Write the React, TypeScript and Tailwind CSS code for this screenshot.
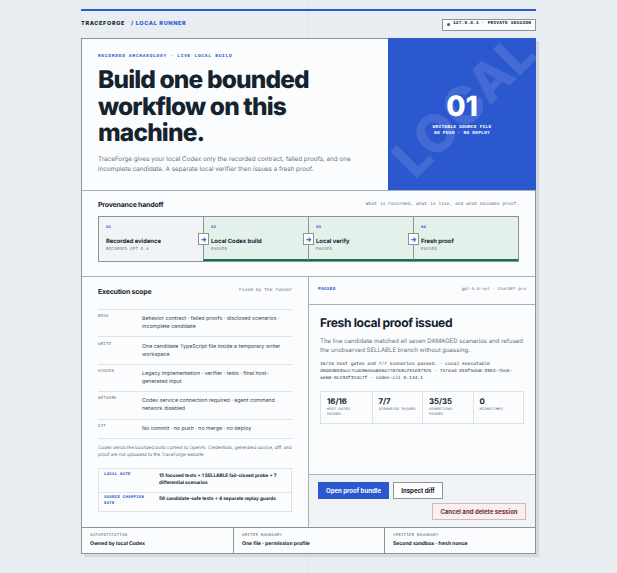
const steps = [
  { n: '01', title: 'Recorded evidence', sub: 'RECORDED GPT-5.6', done: false },
  { n: '02', title: 'Local Codex build', sub: 'PASSED', done: true },
  { n: '03', title: 'Local verify', sub: 'PASSED', done: true },
  { n: '04', title: 'Fresh proof', sub: 'PASSED', done: true },
]

const scope = [
  { k: 'READ', v: 'Behavior contract · failed proofs · disclosed scenarios · incomplete candidate' },
  { k: 'WRITE', v: 'One candidate TypeScript file inside a temporary writer workspace' },
  { k: 'HIDDEN', v: 'Legacy implementation · verifier · tests · final host-generated input' },
  { k: 'NETWORK', v: 'Codex service connection required · agent command network disabled' },
  { k: 'GIT', v: 'No commit · no push · no merge · no deploy' },
]

const stats = [
  { v: '16/16', l: 'HOST GATES PASSED' },
  { v: '7/7', l: 'SCENARIOS PASSED' },
  { v: '35/35', l: 'ASSERTIONS PASSED' },
  { v: '0', l: 'MISMATCHES' },
]

const boundaries = [
  { k: 'AUTHENTICATION', v: 'Owned by local Codex' },
  { k: 'WRITER BOUNDARY', v: 'One file · permission profile' },
  { k: 'VERIFIER BOUNDARY', v: 'Second sandbox · fresh nonce' },
]

export default function App() {
  return (
    <div className="min-h-[573px] bg-[#e8edf1] bg-[linear-gradient(90deg,transparent_308px,#dfe5e9_308px,#dfe5e9_309px,transparent_309px)] font-['Inter',sans-serif] text-[#14232e] [text-rendering:geometricPrecision]">
      <div className="mx-auto w-[455px] pt-[9px]">
        {/* Top bar */}
        <header className="flex h-[29px] items-center justify-between border-t-2 border-[#2b57cf]">
          <div className="flex items-center gap-[6px] text-[5.5px] font-extrabold tracking-[0.12em]">
            <span>TRACEFORGE</span>
            <span className="text-[#2b57cf]">/ LOCAL RUNNER</span>
          </div>
          <div className="flex h-[12px] w-[94px] items-center justify-center gap-[3px] border border-[#8a9599] bg-[#fbfcfe] font-['Liberation_Mono',monospace] text-[4.6px] font-bold tracking-[0.03em]">
            <span className="h-[3px] w-[3px] rounded-full bg-[#12724f]" />
            127.0.0.1 · PRIVATE SESSION
          </div>
        </header>

        <main className="border border-[#8a9599] bg-[#fbfcfe] shadow-[3px_3px_0_#d3d9dd]">
          {/* Hero */}
          <section className="flex h-[152px] border-b border-[#a7b0b5]">
            <div className="flex-1 pt-[14px] pr-[30px] pl-4">
              <p className="font-['Liberation_Mono',monospace] text-[4.6px] leading-[7px] font-bold tracking-[0.15em] text-[#2b57cf]">
                RECORDED ARCHAEOLOGY · LIVE LOCAL BUILD
              </p>
              <h1 className="mt-[6px] text-[24.5px] leading-[26.7px] font-extrabold tracking-[-0.035em]">
                Build one bounded
                <br />
                workflow on this
                <br />
                machine.
              </h1>
              <p className="mt-[8px] text-[6.3px] leading-[10px] text-[#68757e]">
                TraceForge gives your local Codex only the recorded contract, failed proofs, and one incomplete candidate. A separate local verifier then issues a fresh proof.
              </p>
            </div>
            <div className="relative -mt-px -mr-px flex w-[148px] flex-col items-center justify-center overflow-hidden bg-[#2b57cf] text-white">
              <span className="absolute top-[40px] left-[-12px] w-[180px] rotate-[-45deg] text-[52px] leading-none font-extrabold whitespace-nowrap text-white/12">
                LOCAL
              </span>
              <span className="relative text-[28px] leading-none font-extrabold">01</span>
              <span className="relative mt-[5px] text-center font-['Liberation_Mono',monospace] text-[4.6px] leading-[6px] font-bold tracking-[0.04em]">
                WRITABLE SOURCE FILE
                <br />
                NO PUSH · NO DEPLOY
              </span>
            </div>
          </section>

          {/* Provenance */}
          <section className="h-[86px] border-b border-[#a7b0b5] px-4 pt-[9px]">
            <div className="flex items-center justify-between">
              <h2 className="text-[7px] leading-[10px] font-bold tracking-[-0.03em]">Provenance handoff</h2>
              <span className="font-['Liberation_Mono',monospace] text-[4.65px] text-[#5f6c75]">
                What is recorded, what is live, and what becomes proof.
              </span>
            </div>
            <ol className="mt-[6px] grid h-[46px] grid-cols-[104px_105px_105px_1fr] border border-[#8a9599]">
              {steps.map((s, i) => (
                <li
                  key={s.n}
                  className={`relative pt-[8px] pl-[7px] ${i > 0 ? 'border-l border-[#8a9599]' : ''} ${
                    s.done ? 'border-b-2 border-b-[#12724f] bg-[#e3f1ea]' : 'bg-[#f1f4f7]'
                  }`}
                >
                  {i > 0 && (
                    <span className="absolute top-[16px] left-[-6px] z-10 flex h-[12px] w-[11px] items-center justify-center border border-[#8a9599] bg-white text-[7px] leading-none font-bold text-[#2b57cf]">
                      →
                    </span>
                  )}
                  <p className="font-['Liberation_Mono',monospace] text-[4px] leading-[6px] font-bold text-[#2b57cf]">{s.n}</p>
                  <p className="mt-[7px] text-[5.85px] leading-[8px] font-bold">{s.title}</p>
                  <p className="mt-[1.3px] font-['Liberation_Mono',monospace] text-[4px] leading-[6px] tracking-[0.07em] text-[#5f6c75]">{s.sub}</p>
                </li>
              ))}
            </ol>
          </section>

          {/* Scope and proof */}
          <section className="grid h-[250px] grid-cols-[227px_1fr]">
            <div className="border-r border-[#a7b0b5] px-4 pt-[9px]">
              <div className="flex items-center justify-between">
                <h2 className="text-[7px] leading-[11px] font-bold tracking-[-0.03em]">Execution scope</h2>
                <span className="font-['Liberation_Mono',monospace] text-[4.65px] text-[#5f6c75]">Fixed by the runner</span>
              </div>
              <dl className="mt-[12px] border-t border-[#dde2e6]">
                {scope.map((r) => (
                  <div key={r.k} className="flex border-b border-[#dde2e6] py-[5.2px]">
                    <dt className="w-[44px] shrink-0 font-['Liberation_Mono',monospace] text-[4px] leading-[4px] tracking-[0.07em] text-[#5f6c75]">{r.k}</dt>
                    <dd className="text-[5.3px] leading-[8px] text-[#34434e]">{r.v}</dd>
                  </div>
                ))}
              </dl>
              <p className="mt-[6px] text-[4.5px] leading-[7.6px] text-[#68757e]">
                Codex sends the bounded build context to OpenAI. Credentials, generated source, diff, and proof are not uploaded to the TraceForge website.
              </p>
              <div className="mt-[7.5px] border border-[#dde2e6]">
                <div className="flex border-b border-[#dde2e6] px-[5px] pt-[4.2px] pb-[5px]">
                  <span className="w-[55px] shrink-0 pr-[10px] font-['Liberation_Mono',monospace] text-[4px] leading-[5.6px] font-bold tracking-[0.07em] text-[#2b57cf]">LOCAL GATE</span>
                  <span className="text-[4.7px] leading-[7px] font-bold">15 focused tests + 1 SELLABLE fail-closed probe + 7 differential scenarios</span>
                </div>
                <div className="flex px-[5px] pt-[3.4px] pb-[4px]">
                  <span className="w-[55px] shrink-0 pr-[10px] font-['Liberation_Mono',monospace] text-[4px] leading-[5.6px] font-bold tracking-[0.07em] text-[#2b57cf]">SOURCE CHAMPION GATE</span>
                  <span className="text-[4.7px] leading-[7px] font-bold">56 candidate-safe tests + 4 separate replay guards</span>
                </div>
              </div>
            </div>

            <div className="flex flex-col">
              <div className="flex h-[28px] items-center justify-between border-b border-[#a7b0b5] px-[9px] font-['Liberation_Mono',monospace]">
                <span className="text-[4.5px] font-bold tracking-[0.05em] text-[#2b57cf]">PASSED</span>
                <span className="text-[4.3px] text-[#5f6c75]">gpt-5.6-sol · ChatGPT pro</span>
              </div>
              <div className="flex-1 px-[11px] pt-[10px]">
                <h2 className="text-[12.1px] leading-[16px] font-bold tracking-[-0.03em]">Fresh local proof issued</h2>
                <p className="mt-[5.6px] text-[6.05px] leading-[9.6px] text-[#68757e]">
                  The live candidate matched all seven DAMAGED scenarios and refused the unobserved SELLABLE branch without guessing.
                </p>
                <p className="mt-[5px] pr-[6px] font-['Liberation_Mono',monospace] text-[4.65px] leading-[7.2px] text-[#22313b]">
                  16/16 host gates and 7/7 scenarios passed. · Local executable d9b0d853acc7cab36eba859a778763c231e37325 · Thread 019f5eb8-3394-7bc0-ae68-0c134f314c7f · codex-cli 0.144.1
                </p>
                <div className="mt-[9px] grid h-[33px] grid-cols-4 border border-[#dde2e6]">
                  {stats.map((s, i) => (
                    <div key={s.l} className={`px-[6px] pt-[3.5px] ${i > 0 ? 'border-l border-[#dde2e6]' : ''}`}>
                      <p className="text-[7.8px] leading-[11px] font-bold">{s.v}</p>
                      <p className="mt-[1px] font-['Liberation_Mono',monospace] text-[3.7px] leading-[5px] tracking-[0.03em] text-[#5f6c75]">{s.l}</p>
                    </div>
                  ))}
                </div>
              </div>
              <div className="flex h-[53px] flex-col gap-[4px] border-t border-[#a7b0b5] bg-[#f1f4f7] px-[9px] pt-[7px]">
                <div className="flex gap-[4px]">
                  <button className="h-[17px] w-[71px] bg-[#2b57cf] text-[6.05px] font-bold text-white">Open proof bundle</button>
                  <button className="h-[17px] w-[50px] border border-[#8a9599] bg-white text-[6.05px] font-bold">Inspect diff</button>
                </div>
                <div className="flex justify-end">
                  <button className="h-[17px] w-[94px] border border-[#d9b5b5] bg-[#f6f0f0] text-[6.05px] font-bold text-[#7f2a2f]">Cancel and delete session</button>
                </div>
              </div>
            </div>
          </section>

          {/* Boundaries */}
          <section className="grid h-[26px] grid-cols-3 border-t border-[#8a9599]">
            {boundaries.map((b, i) => (
              <div key={b.k} className={`pt-[5px] pl-[8px] ${i > 0 ? 'border-l border-[#8a9599]' : ''}`}>
                <p className="font-['Liberation_Mono',monospace] text-[4px] leading-[6px] tracking-[0.07em] text-[#5f6c75]">{b.k}</p>
                <p className="mt-[2px] text-[5.05px] leading-[7px] font-bold">{b.v}</p>
              </div>
            ))}
          </section>
        </main>
      </div>
    </div>
  )
}
